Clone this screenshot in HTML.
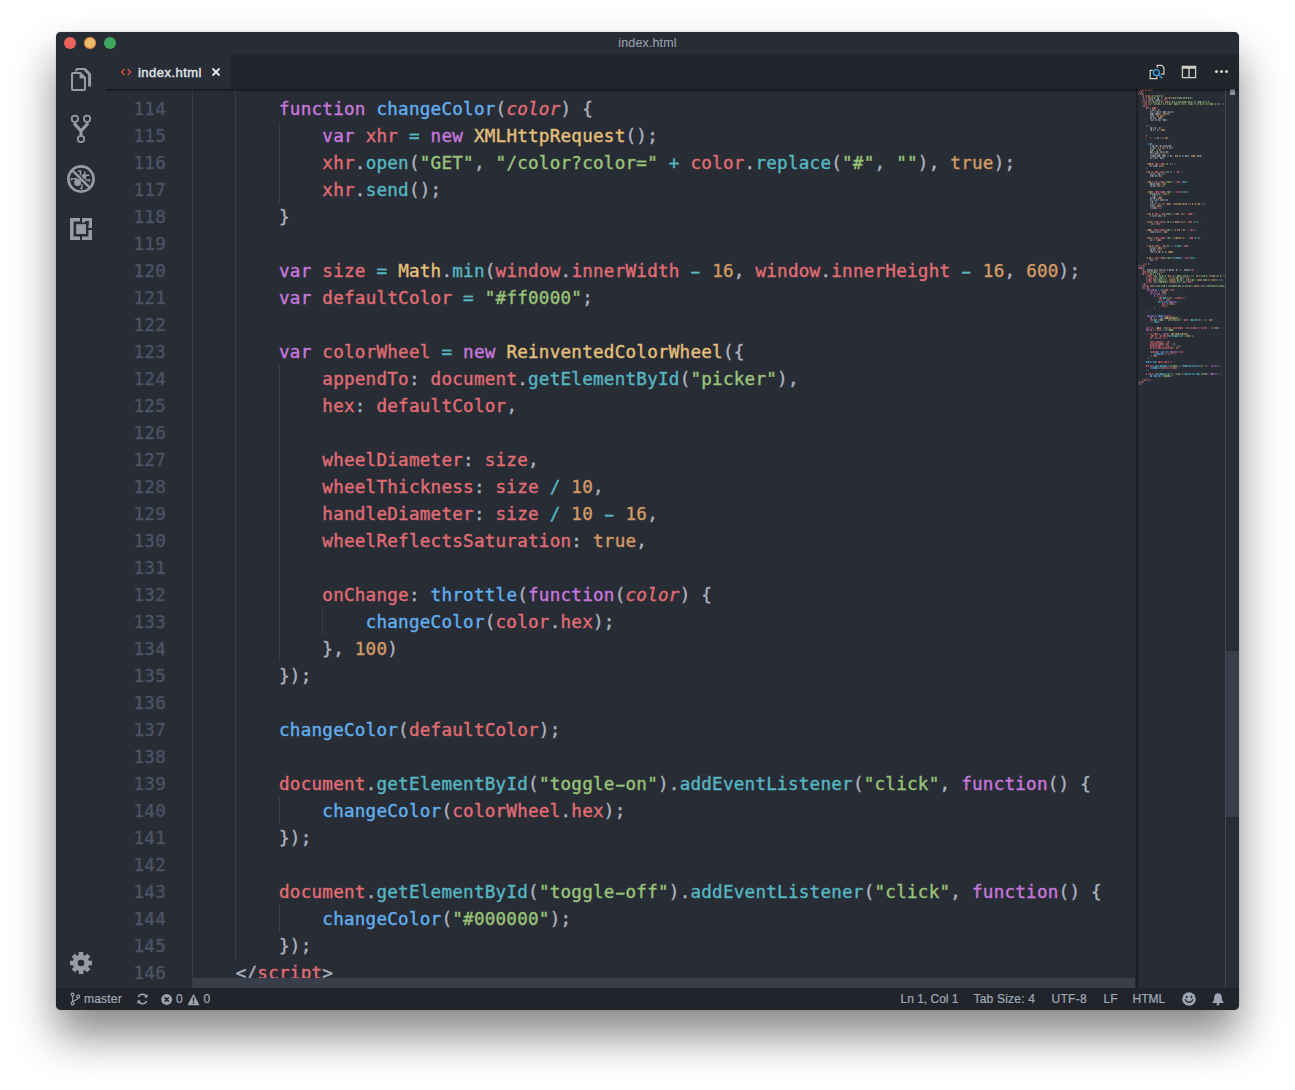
<!DOCTYPE html>
<html lang="en">
<head>
<meta charset="utf-8">
<title>index.html</title>
<style>
html,body{margin:0;padding:0;background:#fff;}
body{width:1295px;height:1090px;position:relative;overflow:hidden;font-family:"Liberation Sans",sans-serif;}
.shadow{position:absolute;left:56px;top:32px;width:1183px;height:978px;border-radius:5px;
  box-shadow:0 0 1px rgba(0,0,0,.45),0 26px 44px rgba(0,0,0,.47);}
.window{position:absolute;left:56px;top:32px;width:1183px;height:978px;border-radius:5px;background:#282c34;overflow:hidden;}
.titlebar{position:absolute;left:0;top:0;right:0;height:22px;background:#282c34;}
.title{position:absolute;left:0;right:0;top:0;height:22px;line-height:22px;text-align:center;font-size:12.5px;color:#9da5b4;letter-spacing:.15px;}
.tl{position:absolute;top:5px;width:12px;height:12px;border-radius:50%;}
.activity{position:absolute;left:0;top:22px;width:50px;bottom:22px;background:#282c34;}
.tabs{position:absolute;left:50px;top:22px;right:0;height:35px;background:#21252b;}
.tab{position:absolute;left:0;top:0;width:124px;height:35px;background:#282c34;}
.tab .lbl{position:absolute;left:32px;top:.7px;line-height:35px;font-size:13px;color:#dfe2e7;letter-spacing:.47px;-webkit-text-stroke:.45px #dfe2e7;}
.editor{position:absolute;left:50px;top:57px;right:0;bottom:22px;background:#282c34;overflow:hidden;}
.topshadow{position:absolute;left:0;right:0;top:0;height:4px;background:linear-gradient(to bottom,rgba(0,0,0,.55),rgba(0,0,0,.18) 45%,rgba(0,0,0,0));z-index:5;}
.mono{font-family:"DejaVu Sans Mono","Liberation Mono",monospace;font-size:17.6px;letter-spacing:.234px;line-height:27px;-webkit-text-stroke:.4px currentColor;}
.nums{position:absolute;left:0;top:6.5px;width:60px;text-align:right;color:#4b5366;}
.code{position:absolute;left:86.4px;top:6.5px;color:#abb2bf;}
.ln{height:27px;white-space:pre;}
.k{color:#c678dd}.f{color:#61afef}.m{color:#56b6c2}.v{color:#e06c75}.s{color:#98c379}
.n{color:#d19a66}.w{display:inline-block;transform:scaleX(1.75);}.c{color:#e5c07b}.o{color:#56b6c2}.i{color:#e06c75;font-style:italic}
.g{position:absolute;width:1px;background:#3b4048;}
.mmwrap{position:absolute;left:1032px;top:0;width:87px;bottom:0;}
.mmshadow{position:absolute;left:1029px;top:0;width:3px;bottom:0;background:linear-gradient(to right,rgba(0,0,0,0),rgba(0,0,0,.22) 45%,rgba(0,0,0,.5));}
.mm{position:absolute;left:0;top:0;}
.vline{position:absolute;left:1119px;top:0;width:1px;bottom:0;background:#434955;}
.vslider{position:absolute;left:1120px;top:562px;width:13px;height:166px;background:#383e4a;}
.hslider{position:absolute;left:86px;top:889px;width:943px;height:10px;background:#383e4a;}
.ovr{position:absolute;left:1124px;top:0;width:5px;height:6px;background:#8c939f;}
.status{position:absolute;left:0;right:0;bottom:0;height:22px;background:#21252b;color:#a2aab8;font-size:12px;line-height:22px;-webkit-text-stroke:.2px #a2aab8;}
.status span{position:absolute;top:0;white-space:nowrap;}
svg{display:block;}
.abs{position:absolute;}
</style>
</head>
<body>
<div class="shadow"></div>
<div class="window">
  <div class="titlebar">
    <div class="tl" style="left:8px;background:#ea635a"></div>
    <div class="tl" style="left:28px;background:#e9bd69;box-shadow:inset 0 0 0 1px rgba(217,80,40,.55)"></div>
    <div class="tl" style="left:48px;background:#3fa65e"></div>
    <div class="title">index.html</div>
  </div>

  <div class="activity">
    <!-- activity icons, coordinates relative to activity bar (abs x-56, abs y-54) -->
    <svg class="abs" style="left:0;top:0" width="50" height="934" viewBox="56 54 50 934" fill="none" stroke="#989ca2">
      <!-- explorer -->
      <g stroke-width="2" stroke-linejoin="round">
        <path d="M73 73h7.400l4.600 4.800V89a1 1 0 0 1-1 1H73a1 1 0 0 1-1-1V74a1 1 0 0 1 1-1z"/>
        <path d="M79.600 72.600v6h5.800z" fill="#989ca2" stroke="none"/>
        <path d="M76.200 71.400V70a1 1 0 0 1 1-1h8"/>
        <path d="M84.800 69.200l4.800 5v12.400" stroke-width="3"/>
      </g>
      <!-- git -->
      <g>
        <circle cx="74.900" cy="118.800" r="3.200" stroke-width="1.700"/>
        <circle cx="87.100" cy="118.800" r="3.200" stroke-width="1.700"/>
        <circle cx="81" cy="139" r="3.200" stroke-width="1.700"/>
        <path d="M74.900 122.400v2l6.100 6.600 6.100-6.600v-2M81 130.400v5.200" stroke-width="3.100" stroke-linejoin="round"/>
      </g>
      <!-- debug -->
      <g>
        <circle cx="81" cy="179" r="12.550" stroke-width="2.800"/>
        <path d="M72.300 170.300l17.400 17.400" stroke-width="2.500"/>
        <circle cx="77.600" cy="182.500" r="3.500" fill="#989ca2" stroke="none"/>
        <path d="M81.300 176l1.900-1.900c1.500-.6 3 .4 3.200 1.800.2 1.200 0 2.100-.6 2.900l-1.300.4z" fill="#989ca2" stroke="none"/>
        <path d="M78 171h2.500v4.600M84.700 171.400v3M86 175.300h3.200M85.400 179.900h4.100v1.800M71.400 180.600v-1.900h5.800M81.900 184.200v4.300h-1.700" stroke-width="1.500"/>
      </g>
      <!-- extensions -->
      <g stroke="none" fill="#989ca2">
        <path d="M70 218h10v3.600h-6.400v14.800H80V240H70z"/>
        <path d="M82 218h10v10h-3.500v-3.300h.400v-3.700h-3.800v1.600H82z"/>
        <path d="M82 236.400h6.400V230H92v10H82z"/>
        <rect x="76.200" y="224.200" width="9.800" height="9.800"/>
      </g>
      <!-- gear -->
      <g transform="translate(81 963)" stroke="none" fill="#989ca2">
        <circle r="8.200"/>
        <rect x="-2.250" y="-11" width="4.500" height="22"/>
        <rect x="-11" y="-2.250" width="22" height="4.500"/>
        <rect x="-2.250" y="-11" width="4.500" height="22" transform="rotate(45)"/>
        <rect x="-2.250" y="-11" width="4.500" height="22" transform="rotate(-45)"/>
        <circle r="3.300" fill="#282c34"/>
      </g>
    </svg>
  </div>

  <div class="tabs">
    <div class="tab">
      <svg class="abs" style="left:14px;top:12.800px" width="12" height="10" viewBox="0 0 12 10" fill="none" stroke="#e05434" stroke-width="1.300"><path d="M4.400 2L1.500 5l2.900 3M7.600 2l2.900 3-2.900 3"/></svg>
      <div class="lbl">index.html</div>
      <svg class="abs" style="left:105px;top:13.400px" width="10" height="10" viewBox="0 0 10 10" fill="none" stroke="#e8eaed" stroke-width="1.800"><path d="M1.500 1.500l7 7M8.500 1.500l-7 7"/></svg>
    </div>
    <!-- editor actions -->
    <svg class="abs" style="left:1042px;top:9px" width="18" height="17" viewBox="1148 63 18 17" fill="none" stroke="#cfcfc6" stroke-width="1.250">
      <path d="M1157.200 67.800V65.400H1161.800L1163.900 67.700V74.100H1160.800"/>
      <path d="M1152.800 70.400H1150.200V78.700H1156.900V76.600"/>
      <circle cx="1156.400" cy="72.600" r="3" stroke="#3da5ea" stroke-width="1.300"/>
      <path d="M1158.600 74.900l3.700 3.400" stroke="#3da5ea" stroke-width="1.400"/>
    </svg>
    <svg class="abs" style="left:1075px;top:11px" width="16" height="14" viewBox="0 0 16 14" fill="none" stroke="#cfcfc6">
      <rect x="1.400" y="1.400" width="13.200" height="11.200" stroke-width="1.300"/>
      <path d="M1.400 2.400h13.200" stroke-width="2.600"/>
      <path d="M8 2v10.400" stroke-width="1.400"/>
    </svg>
    <svg class="abs" style="left:1107px;top:13px" width="16" height="8" viewBox="0 0 16 8" fill="#cfcfc6"><circle cx="3.450" cy="4.450" r="1.550"/><circle cx="8.500" cy="4.450" r="1.550"/><circle cx="13.550" cy="4.450" r="1.550"/></svg>
  </div>

  <div class="editor">
    <div class="nums mono">
<div class="ln">114</div>
<div class="ln">115</div>
<div class="ln">116</div>
<div class="ln">117</div>
<div class="ln">118</div>
<div class="ln">119</div>
<div class="ln">120</div>
<div class="ln">121</div>
<div class="ln">122</div>
<div class="ln">123</div>
<div class="ln">124</div>
<div class="ln">125</div>
<div class="ln">126</div>
<div class="ln">127</div>
<div class="ln">128</div>
<div class="ln">129</div>
<div class="ln">130</div>
<div class="ln">131</div>
<div class="ln">132</div>
<div class="ln">133</div>
<div class="ln">134</div>
<div class="ln">135</div>
<div class="ln">136</div>
<div class="ln">137</div>
<div class="ln">138</div>
<div class="ln">139</div>
<div class="ln">140</div>
<div class="ln">141</div>
<div class="ln">142</div>
<div class="ln">143</div>
<div class="ln">144</div>
<div class="ln">145</div>
<div class="ln">146</div>
    </div>
    <!-- indent guides (editor-relative) -->
    <div class="g" style="left:86px;top:0;height:899px"></div>
    <div class="g" style="left:129px;top:0;height:869.5px"></div>
    <div class="g" style="left:173px;top:32.500px;height:81px"></div>
    <div class="g" style="left:173px;top:275.500px;height:297px"></div>
    <div class="g" style="left:173px;top:707.500px;height:27px"></div>
    <div class="g" style="left:173px;top:815.500px;height:27px"></div>
    <div class="g" style="left:216px;top:518.500px;height:27px"></div>
    <div class="code mono">
<div class="ln">        <span class="k">function</span> <span class="f">changeColor</span>(<span class="i">color</span>) {</div>
<div class="ln">            <span class="k">var</span> <span class="v">xhr</span> <span class="o">=</span> <span class="k">new</span> <span class="c">XMLHttpRequest</span>();</div>
<div class="ln">            <span class="v">xhr</span>.<span class="m">open</span>(<span class="s">"GET"</span>, <span class="s">"/color?color="</span> <span class="o">+</span> <span class="v">color</span>.<span class="m">replace</span>(<span class="s">"#"</span>, <span class="s">""</span>), <span class="n">true</span>);</div>
<div class="ln">            <span class="v">xhr</span>.<span class="m">send</span>();</div>
<div class="ln">        }</div>
<div class="ln"></div>
<div class="ln">        <span class="k">var</span> <span class="v">size</span> <span class="o">=</span> <span class="c">Math</span>.<span class="m">min</span>(<span class="v">window</span>.<span class="v">innerWidth</span> <span class="o w">-</span> <span class="n">16</span>, <span class="v">window</span>.<span class="v">innerHeight</span> <span class="o w">-</span> <span class="n">16</span>, <span class="n">600</span>);</div>
<div class="ln">        <span class="k">var</span> <span class="v">defaultColor</span> <span class="o">=</span> <span class="s">"#ff0000"</span>;</div>
<div class="ln"></div>
<div class="ln">        <span class="k">var</span> <span class="v">colorWheel</span> <span class="o">=</span> <span class="k">new</span> <span class="c">ReinventedColorWheel</span>({</div>
<div class="ln">            <span class="v">appendTo</span>: <span class="v">document</span>.<span class="m">getElementById</span>(<span class="s">"picker"</span>),</div>
<div class="ln">            <span class="v">hex</span>: <span class="v">defaultColor</span>,</div>
<div class="ln"></div>
<div class="ln">            <span class="v">wheelDiameter</span>: <span class="v">size</span>,</div>
<div class="ln">            <span class="v">wheelThickness</span>: <span class="v">size</span> <span class="o">/</span> <span class="n">10</span>,</div>
<div class="ln">            <span class="v">handleDiameter</span>: <span class="v">size</span> <span class="o">/</span> <span class="n">10</span> <span class="o w">-</span> <span class="n">16</span>,</div>
<div class="ln">            <span class="v">wheelReflectsSaturation</span>: <span class="n">true</span>,</div>
<div class="ln"></div>
<div class="ln">            <span class="v">onChange</span>: <span class="f">throttle</span>(<span class="k">function</span>(<span class="i">color</span>) {</div>
<div class="ln">                <span class="f">changeColor</span>(<span class="v">color</span>.<span class="v">hex</span>);</div>
<div class="ln">            }, <span class="n">100</span>)</div>
<div class="ln">        });</div>
<div class="ln"></div>
<div class="ln">        <span class="f">changeColor</span>(<span class="v">defaultColor</span>);</div>
<div class="ln"></div>
<div class="ln">        <span class="v">document</span>.<span class="m">getElementById</span>(<span class="s">"toggle<span class="w">-</span>on"</span>).<span class="m">addEventListener</span>(<span class="s">"click"</span>, <span class="k">function</span>() {</div>
<div class="ln">            <span class="f">changeColor</span>(<span class="v">colorWheel</span>.<span class="v">hex</span>);</div>
<div class="ln">        });</div>
<div class="ln"></div>
<div class="ln">        <span class="v">document</span>.<span class="m">getElementById</span>(<span class="s">"toggle<span class="w">-</span>off"</span>).<span class="m">addEventListener</span>(<span class="s">"click"</span>, <span class="k">function</span>() {</div>
<div class="ln">            <span class="f">changeColor</span>(<span class="s">"#000000"</span>);</div>
<div class="ln">        });</div>
<div class="ln">    &lt;/<span class="v">script</span>&gt;</div>
    </div>
    <div class="hslider"></div>
    <div class="mmshadow"></div>
    <div class="mmwrap"><svg class="mm" width="87" height="296" viewBox="0 0 87 296" shape-rendering="crispEdges" fill="none" stroke-width="1.15"><path d="M43 93h1M58 133h1M58 149h2M51 169h1M20 207h1M28 209h1M25 239h1M46 239h1M71 239h1M33 247h1M40 247h1M43 247h1M33 255h1M33 257h1M21 277h1M29 277h1M21 285h1M53 285h1M57 285h1" stroke="#56b6c2" stroke-opacity="0.14"/><path d="M44 93h1M43 103h3M55 133h2M60 133h1M61 149h1M36 157h1M38 157h1M35 169h1M37 169h1M54 169h1M56 169h1M21 203h1M25 211h1M20 229h1M44 231h1M52 231h1M55 231h1M17 239h1M23 245h1M35 247h1M38 257h1M50 277h1M52 277h1M58 277h1M60 277h1M19 285h1M26 285h1M46 285h1M56 285h1M58 285h1M61 285h1" stroke="#56b6c2" stroke-opacity="0.28"/><path d="M46 93h3M46 103h3M57 133h1M59 133h1M37 157h1M39 157h1M41 157h1M36 169h1M39 169h1M41 169h1M52 169h2M29 209h1M29 215h1M18 231h1M56 231h2M16 233h3M26 239h1M25 241h1M32 247h1M36 247h1M39 247h1M41 247h2M18 277h3M24 277h1M26 277h1M28 277h1M30 277h1M46 277h1M49 277h1M53 277h5M17 285h2M25 285h1M29 285h1M48 285h5M54 285h2" stroke="#56b6c2" stroke-opacity="0.45"/><path d="M45 93h1M57 149h1M60 149h1M40 157h1M42 157h1M38 169h1M40 169h1M42 169h1M55 169h1M25 209h3M16 231h2M53 231h2M58 231h1M19 233h1M31 247h1M34 247h1M37 247h2M44 247h1M17 277h1M22 277h2M25 277h1M27 277h1M45 277h1M47 277h2M51 277h1M59 277h1M20 285h1M22 285h3M27 285h1M30 285h1M47 285h1M59 285h2" stroke="#56b6c2" stroke-opacity="0.68"/><path d="M14 55h1M22 201h1M25 227h1M22 263h1M26 263h1M26 265h1M20 279h1" stroke="#61afef" stroke-opacity="0.14"/><path d="M8 55h1M10 55h1M20 201h1M22 213h2M27 213h2M18 227h1M27 227h1M23 263h1M27 263h2M17 265h1M25 265h1M9 273h1M11 273h1M13 273h1M16 273h1M18 273h1M13 279h1M22 279h1M14 287h1M19 287h2M22 287h1" stroke="#61afef" stroke-opacity="0.28"/><path d="M11 55h2M17 201h2M23 201h2M20 213h2M24 213h1M26 213h1M29 213h1M17 227h1M20 227h1M22 227h1M24 227h1M26 227h1M24 263h2M29 263h1M16 265h1M18 265h2M21 265h4M12 273h1M12 279h1M14 279h2M18 279h2M21 279h1M18 287h1" stroke="#61afef" stroke-opacity="0.45"/><path d="M13 55h1M21 227h1M23 227h1M20 265h1M8 273h1M10 273h1M15 273h1M17 273h1M16 279h2M12 287h2M16 287h2M21 287h1" stroke="#61afef" stroke-opacity="0.68"/><path d="M18 7h1M22 7h1M24 7h1M15 9h1M23 9h1M36 9h1M38 9h1M47 9h1M49 9h1M14 13h1M16 13h1M24 13h1M32 13h1M35 13h1M43 13h1M49 13h1M54 13h2M59 13h1M63 13h1M67 13h1M14 15h1M18 15h1M30 15h1M35 15h1M39 15h1M61 15h1M63 15h1M66 15h1M31 75h1M33 75h1M27 83h1M27 93h1M27 103h1M33 103h1M21 107h2M33 125h1M27 133h1M33 133h1M27 141h1M33 141h1M27 149h1M33 149h1M27 157h1M33 157h1M27 169h1M33 169h1M12 183h1M19 183h1M20 185h1M22 185h1M19 187h1M23 187h1M25 187h1M28 187h1M36 187h2M44 187h1M50 187h1M67 187h1M69 187h1M77 187h1M83 187h1M37 189h1M41 189h1M18 191h2M25 191h1M29 191h1M51 191h1M57 191h1M69 191h1M84 191h1M19 193h2M30 193h1M38 193h1M40 193h1M42 193h1M16 197h1M39 197h1M43 197h1M50 197h1M66 197h1M73 197h1M79 197h1M25 231h1M28 231h1M38 231h1M42 231h1M65 231h2M27 241h1M29 241h2M35 241h1M52 247h2M39 277h1M62 277h1M33 285h1M39 285h1M43 285h1M69 285h1M24 287h1M32 287h1" stroke="#98c379" stroke-opacity="0.14"/><path d="M20 7h1M24 9h1M34 9h1M40 9h1M44 9h1M51 9h1M53 9h1M19 13h2M25 13h1M33 13h1M38 13h1M40 13h1M48 13h1M52 13h1M57 13h1M65 13h1M22 15h2M33 15h1M40 15h1M44 15h4M51 15h1M56 15h3M60 15h1M67 15h2M70 15h2M76 15h1M80 15h1M84 15h1M28 83h1M32 83h2M28 93h1M31 93h1M33 93h1M32 103h1M27 125h2M31 125h1M28 141h1M31 141h2M29 149h1M31 149h2M28 157h1M32 157h1M28 169h2M31 169h1M14 183h1M15 185h1M18 187h1M26 187h1M41 187h1M48 187h1M51 187h1M53 187h3M62 187h3M78 187h1M80 187h1M19 189h1M24 189h3M28 189h1M40 189h1M23 191h1M27 191h2M37 191h1M45 191h1M49 191h1M53 191h1M56 191h1M71 191h1M79 191h1M81 191h3M24 193h1M26 193h1M28 193h2M17 197h2M24 197h1M30 197h1M33 197h1M44 197h1M46 197h2M52 197h3M67 197h3M76 197h1M81 197h1M85 197h2M21 231h1M32 231h2M35 231h1M40 231h1M60 231h1M62 231h1M46 247h1M48 247h1M32 277h1M34 277h1M40 277h1M42 277h1M32 285h1M37 285h1M42 285h1M63 285h1" stroke="#98c379" stroke-opacity="0.28"/><path d="M21 7h1M19 9h1M39 9h1M42 9h2M45 9h1M52 9h1M17 13h2M21 13h1M39 13h1M41 13h2M45 13h2M50 13h1M53 13h1M56 13h1M61 13h1M64 13h1M66 13h1M68 13h1M16 15h2M19 15h1M21 15h1M32 15h1M36 15h1M41 15h1M43 15h1M50 15h1M52 15h1M54 15h1M59 15h1M64 15h2M69 15h1M72 15h1M77 15h1M79 15h1M81 15h1M28 75h2M32 75h1M29 83h2M29 93h1M32 93h1M29 103h1M31 103h1M29 125h1M32 125h1M29 133h1M32 133h1M29 141h1M29 157h2M32 169h1M15 183h1M17 183h2M17 185h1M19 185h1M21 187h2M27 187h1M45 187h3M49 187h1M65 187h1M68 187h1M79 187h1M21 189h2M39 189h1M20 191h1M22 191h1M24 191h1M26 191h1M42 191h1M48 191h1M52 191h1M55 191h1M65 191h2M68 191h1M70 191h1M21 193h1M39 193h1M41 193h1M19 197h3M25 197h1M28 197h1M31 197h2M34 197h1M36 197h3M41 197h2M45 197h1M48 197h2M70 197h3M75 197h1M77 197h2M80 197h1M82 197h2M30 231h2M34 231h1M36 231h2M41 231h1M61 231h1M28 241h1M50 247h1M33 277h1M35 277h1M37 277h2M63 277h2M67 277h1M34 285h1M38 285h1M41 285h1M64 285h4M25 287h2M29 287h1" stroke="#98c379" stroke-opacity="0.45"/><path d="M19 7h1M23 7h1M16 9h1M20 9h1M35 9h1M37 9h1M41 9h1M46 9h1M48 9h1M50 9h1M15 13h1M23 13h1M34 13h1M36 13h1M44 13h1M47 13h1M51 13h1M60 13h1M62 13h1M70 13h1M20 15h1M31 15h1M37 15h2M53 15h1M62 15h1M73 15h2M30 93h1M30 103h1M30 125h1M30 133h1M30 141h1M30 149h1M30 169h1M13 183h1M16 183h1M21 185h1M24 187h1M39 187h2M42 187h1M66 187h1M82 187h1M23 189h1M38 189h1M21 191h1M39 191h2M43 191h1M50 191h1M54 191h1M67 191h1M22 193h2M25 193h1M27 193h1M23 197h1M26 197h1M35 197h1M40 197h1M51 197h1M74 197h1M84 197h1M22 231h3M39 231h1M31 241h4M49 247h1M51 247h1M36 277h1M40 285h1M68 285h1M27 287h2M30 287h2" stroke="#98c379" stroke-opacity="0.68"/><path d="M0 1h1M14 1h1M0 3h1M5 3h1M5 5h1M4 7h1M25 7h1M4 9h1M54 9h1M4 11h1M10 11h1M15 11h1M22 11h1M72 13h1M4 15h1M85 15h1M4 17h1M10 17h1M19 19h1M18 21h1M21 21h1M15 23h3M23 23h1M29 23h1M22 25h1M16 27h2M18 29h1M16 31h1M23 31h1M29 31h1M8 33h1M14 39h1M16 39h1M23 39h1M16 41h1M21 41h1M27 41h1M8 43h1M16 49h1M30 49h1M8 51h1M16 55h1M13 57h1M16 57h1M24 57h1M33 57h1M14 59h1M33 59h1M23 61h1M15 63h1M17 63h1M20 63h1M24 63h1M27 63h1M30 63h1M16 65h1M22 65h1M30 65h1M18 67h1M22 67h1M51 67h1M63 67h1M14 69h1M16 69h1M8 71h1M21 75h1M16 77h1M25 77h1M21 83h1M36 83h1M22 85h1M24 85h1M27 85h1M24 87h1M8 89h1M21 93h1M34 93h1M36 93h1M17 95h1M22 95h1M14 97h1M26 97h1M21 103h1M34 103h1M36 103h1M50 103h1M17 105h1M22 105h1M31 105h1M15 107h1M14 109h1M18 109h1M24 109h1M17 111h1M12 113h1M15 113h1M17 115h3M55 115h1M62 115h1M13 117h1M17 117h1M19 119h1M23 119h1M8 121h1M21 125h1M34 125h1M48 125h1M56 125h1M24 127h1M27 127h1M8 129h1M21 133h1M48 133h1M62 133h1M12 135h1M15 135h1M22 135h1M21 141h1M34 141h1M49 141h1M16 143h1M23 143h1M8 145h1M21 149h1M34 149h1M49 149h1M63 149h1M14 151h1M16 151h1M23 151h1M8 153h1M21 157h1M34 157h1M44 157h1M52 157h1M17 159h2M27 159h1M23 161h1M35 163h1M21 169h1M44 169h1M58 169h1M16 171h1M19 171h1M8 173h1M4 175h2M0 177h2M7 181h1M28 181h1M33 181h1M52 181h1M56 181h1M4 183h1M20 183h3M26 183h1M23 185h1M46 189h1M52 189h1M8 193h1M43 193h1M48 193h1M54 193h1M4 195h2M9 195h1M4 199h1M11 199h1M30 201h1M39 201h1M28 203h1M27 205h2M30 205h1M24 209h1M30 209h1M35 209h1M46 209h2M40 213h1M42 213h1M21 217h1M28 217h2M12 221h1M36 227h1M40 229h3M15 231h1M26 231h1M59 231h1M68 231h1M15 233h1M20 233h2M8 235h1M23 239h1M34 239h1M58 239h1M75 239h1M80 239h1M49 245h2M15 249h1M29 249h1M25 253h1M31 253h1M26 255h1M26 257h1M42 257h1M35 259h1M41 259h1M30 263h1M39 263h1M45 263h1M47 263h1M27 265h1M33 265h1M37 265h2M12 267h1M9 269h1M32 273h1M16 277h1M31 277h1M43 277h2M34 279h1M39 279h1M8 281h3M31 285h1M45 285h1M62 285h1M70 285h1M80 285h2M83 285h1M23 287h1M33 287h1M8 289h1M10 289h1M5 291h1M12 291h1M0 293h1M1 295h1M6 295h1" stroke="#abb2bf" stroke-opacity="0.14"/><path d="M0 5h1M33 9h1M13 11h1M18 11h1M23 11h1M4 13h1M13 13h1M13 15h1M12 19h1M16 21h2M12 23h1M14 23h1M18 23h1M20 23h2M28 23h1M32 23h1M34 23h2M31 25h1M26 27h1M13 29h1M17 29h1M24 29h1M15 31h1M17 31h1M22 31h1M28 31h1M11 37h1M18 39h1M12 41h1M17 41h1M20 41h1M17 49h3M22 49h1M17 57h1M19 57h1M21 57h1M23 57h1M27 57h1M29 57h1M13 59h1M16 59h1M13 61h1M15 61h1M16 63h1M26 63h1M12 65h1M14 65h2M19 65h1M13 67h1M27 67h1M29 67h2M45 67h1M49 67h1M61 67h1M15 69h1M19 69h1M25 69h1M26 75h1M34 75h1M36 75h1M13 77h1M19 77h1M8 79h1M26 83h1M44 83h1M14 85h1M16 85h2M23 85h1M25 85h2M13 87h1M19 87h1M26 93h1M15 95h1M17 97h1M13 105h1M20 105h1M19 107h1M23 107h1M17 109h1M13 111h2M19 111h2M25 111h2M28 111h1M13 113h1M18 113h1M12 115h1M14 115h1M16 115h1M20 115h3M47 115h1M52 115h1M65 115h2M15 117h1M23 117h1M12 119h3M14 127h1M16 127h1M18 127h1M20 127h1M23 127h1M34 133h1M13 135h1M16 135h1M26 141h1M57 141h1M18 143h2M21 143h2M26 149h1M15 151h1M13 159h2M14 161h1M17 161h1M12 163h1M15 163h3M22 163h1M25 163h1M28 163h1M34 169h1M14 171h2M11 175h1M6 177h1M0 179h1M5 179h1M4 181h1M17 181h1M19 181h1M27 181h1M39 181h1M50 181h1M53 181h1M11 183h1M4 185h1M14 185h1M8 187h1M8 189h1M36 189h1M42 189h1M44 189h2M8 191h1M36 191h1M78 191h1M37 193h1M44 193h1M47 193h1M4 197h1M25 201h1M19 207h1M27 207h1M31 211h1M30 213h1M36 215h1M16 219h1M8 223h1M28 227h1M34 227h1M20 231h1M63 231h1M67 231h1M74 231h1M27 239h1M50 239h1M81 239h1M30 247h1M54 247h2M20 263h1M13 267h1M18 267h1M10 269h1M33 273h1M61 277h1M69 277h1M80 277h1M82 277h1M23 279h1M38 279h1M44 285h1M34 287h1M4 291h1M1 293h1M0 295h1" stroke="#abb2bf" stroke-opacity="0.28"/><path d="M17 7h1M14 9h1M11 11h2M17 11h1M20 11h2M31 13h1M29 15h1M12 21h1M14 21h1M13 23h1M22 23h1M27 23h1M30 23h2M33 23h1M13 25h1M15 25h1M17 25h1M20 25h2M12 27h4M16 29h1M14 31h1M18 31h1M21 31h1M27 31h1M12 39h1M15 39h1M17 39h1M15 41h1M19 41h1M12 49h1M12 57h1M14 57h1M25 57h2M30 57h2M12 59h1M17 59h1M31 59h2M34 59h1M12 61h1M14 63h1M18 63h1M22 63h1M25 63h1M29 63h1M13 65h1M18 65h1M20 65h2M12 67h1M14 67h1M16 67h2M19 67h1M24 67h1M33 67h1M41 67h2M44 67h1M50 67h1M59 67h1M12 69h2M17 69h2M23 69h2M12 85h2M15 85h1M15 87h1M18 87h1M14 95h1M18 95h2M21 95h1M12 97h2M16 97h1M26 103h1M14 105h2M18 105h2M21 105h1M14 107h1M17 107h1M12 109h2M16 111h1M22 111h2M27 111h1M29 111h1M13 115h1M15 115h1M16 117h1M15 119h1M17 119h2M26 125h1M12 127h1M15 127h1M17 127h1M22 127h1M26 133h1M14 135h1M12 143h3M17 143h1M20 143h1M12 151h2M26 157h1M12 159h1M15 159h1M12 161h1M15 161h2M13 163h2M18 163h1M20 163h1M24 163h1M27 163h1M26 169h1M12 171h2M9 181h2M12 181h3M18 181h1M21 181h2M25 181h2M29 181h1M35 181h1M42 181h1M46 181h3M51 181h1M17 187h1M35 187h1M61 187h1M76 187h1M18 189h1M17 191h1M63 191h1M18 193h1M45 193h2M15 197h1M65 197h1" stroke="#abb2bf" stroke-opacity="0.45"/><path d="M14 11h1M19 11h1M15 21h1M19 23h1M25 23h2M12 25h1M14 25h1M18 25h2M12 29h1M15 29h1M13 31h1M20 31h1M25 31h2M13 39h1M13 41h1M20 49h1M15 57h1M18 57h1M22 57h1M28 57h1M32 57h1M15 59h1M14 61h1M12 63h2M19 63h1M23 63h1M28 63h1M17 65h1M15 67h1M20 67h2M25 67h2M32 67h1M47 67h2M60 67h1M62 67h1M22 69h1M12 77h1M15 77h1M17 77h2M20 85h2M12 87h1M14 87h1M17 87h1M12 95h2M16 95h1M20 95h1M15 97h1M12 105h1M16 105h1M16 107h1M15 109h2M12 111h1M18 111h1M24 111h1M14 113h1M12 117h1M14 117h1M16 119h1M21 127h1M15 143h1M16 159h1M13 161h1M21 163h1M11 181h1M16 181h1M23 181h1M31 181h2M34 181h1M38 181h1M49 181h1M43 189h1" stroke="#abb2bf" stroke-opacity="0.68"/><path d="M8 201h1M12 205h1M23 205h1M17 207h1M10 245h1M31 263h1" stroke="#c678dd" stroke-opacity="0.14"/><path d="M9 201h1M14 203h1M15 205h3M24 205h2M31 213h1M36 213h1M38 213h1M12 227h1M9 239h1M9 245h1M25 245h1M35 263h1M75 277h2M72 285h1M76 285h2" stroke="#c678dd" stroke-opacity="0.28"/><path d="M11 201h1M13 201h2M12 203h2M13 205h1M19 205h3M26 205h1M16 207h1M34 213h2M37 213h1M9 227h3M13 227h3M12 229h1M22 229h3M8 239h1M10 239h1M8 241h1M10 241h1M26 245h1M32 263h1M34 263h1M36 263h3M73 277h2M77 277h2M75 285h1M78 285h1" stroke="#c678dd" stroke-opacity="0.45"/><path d="M10 201h1M15 201h1M32 213h2M13 229h1M9 241h1M27 245h1M33 263h1M73 285h2" stroke="#c678dd" stroke-opacity="0.68"/><path d="M12 13h1M20 29h1M29 65h1M8 93h2M13 93h1M23 97h1M29 105h1M27 115h1M58 115h1M8 125h1M35 125h2M42 125h1M45 125h1M8 133h1M36 133h1M9 141h1M35 141h2M42 141h2M47 141h1M25 143h1M8 149h1M35 149h1M8 157h2M13 157h1M13 169h1M10 185h1M32 189h1M15 193h1M61 197h1M63 197h1M23 203h1M34 209h1M70 231h1M73 239h1" stroke="#d19a66" stroke-opacity="0.14"/><path d="M13 1h1M13 7h1M16 7h1M13 9h1M29 9h2M32 9h1M30 13h1M10 15h1M12 15h1M26 15h1M25 25h1M27 25h1M25 27h1M22 39h1M25 49h1M26 59h2M22 61h1M24 65h1M26 65h2M57 67h1M9 75h1M13 75h1M23 77h1M8 83h2M13 83h1M24 95h1M27 95h1M22 97h1M24 97h2M9 103h2M24 105h2M30 105h1M23 109h1M24 115h1M26 115h1M35 115h1M40 115h1M43 115h2M51 115h1M59 115h1M64 115h1M21 119h2M9 125h2M37 125h1M43 125h1M46 125h1M9 133h1M14 133h1M35 133h1M40 133h1M44 133h2M18 135h1M8 141h1M13 141h1M40 141h1M9 149h1M13 149h2M37 149h1M40 149h1M42 149h3M46 149h1M18 151h2M10 157h1M22 159h1M25 159h2M20 161h3M8 169h1M14 169h1M9 183h1M11 185h1M15 187h1M31 187h1M33 187h1M73 187h1M85 187h2M16 189h2M33 189h2M75 191h1M77 191h1M17 193h1M34 193h1M59 197h1M62 197h1M33 209h1M29 211h1M33 215h1M35 215h1M71 231h1M48 239h1M35 255h1M35 257h1M40 257h1M38 259h1M15 267h1" stroke="#d19a66" stroke-opacity="0.28"/><path d="M10 1h3M11 7h1M10 9h2M28 9h1M10 13h2M27 13h2M11 15h1M25 15h1M27 15h1M24 25h1M28 25h3M19 27h1M23 27h2M23 29h1M23 41h1M26 41h1M24 49h1M27 49h1M29 49h1M20 59h1M22 59h1M24 59h2M19 61h1M25 65h1M38 67h1M53 67h2M10 75h1M21 77h2M24 77h1M10 83h1M14 83h1M22 87h2M10 93h1M14 93h1M25 95h1M19 97h3M13 103h2M26 105h3M20 109h1M17 113h1M25 115h1M31 115h2M36 115h4M42 115h1M46 115h1M50 115h1M60 115h1M19 117h1M21 117h2M12 125h1M38 125h1M40 125h1M10 133h4M38 133h1M41 133h1M43 133h1M46 133h1M19 135h3M37 141h1M46 141h1M26 143h1M10 149h3M36 149h1M45 149h1M22 151h1M11 157h1M19 161h1M30 163h1M34 163h1M9 169h1M18 171h1M9 185h1M13 185h1M16 187h1M32 187h1M58 187h1M71 187h2M74 187h1M15 189h1M31 189h1M35 189h1M15 191h1M31 191h3M35 191h1M59 191h1M61 191h2M73 191h1M16 193h1M33 193h1M35 193h1M12 197h3M56 197h1M58 197h1M64 197h1M24 203h2M27 203h1M31 209h2M28 211h1M30 211h1M31 215h2M73 231h1M49 239h1M74 239h1M79 239h1M41 257h1M16 267h1" stroke="#d19a66" stroke-opacity="0.45"/><path d="M10 7h1M14 7h1M12 9h1M27 9h1M31 9h1M29 13h1M20 21h1M26 25h1M20 27h1M22 27h1M21 29h2M21 39h1M24 41h2M28 49h1M29 59h1M21 61h1M37 67h1M39 67h1M55 67h2M11 75h2M14 75h1M11 83h1M21 87h1M11 93h2M26 95h1M11 103h2M21 109h2M29 115h2M41 115h1M45 115h1M48 115h1M54 115h1M57 115h1M61 115h1M20 117h1M11 125h1M14 125h1M39 125h1M44 125h1M26 127h1M37 133h1M39 133h1M10 141h3M39 141h1M41 141h1M45 141h1M27 143h2M38 149h2M41 149h1M20 151h2M12 157h1M14 157h1M20 159h2M23 159h1M31 163h3M11 169h2M10 183h1M12 185h1M30 187h1M59 187h1M75 187h1M16 191h1M34 191h1M60 191h1M74 191h1M76 191h1M32 193h1M36 193h1M57 197h1M60 197h1M26 203h1M34 215h1M72 231h1M77 239h2M36 255h1M39 259h1M17 267h1" stroke="#d19a66" stroke-opacity="0.68"/><path d="M1 1h1M2 3h1M7 11h1M24 11h2M5 15h1M8 17h1M16 75h1M22 75h1M20 83h1M38 83h1M42 93h1M16 103h1M20 125h1M22 125h1M51 141h1M16 157h1M22 157h1M7 175h1M6 181h1M55 181h1M6 185h1M51 189h1M49 193h1M8 197h1M18 203h1M26 215h1M14 233h1M59 239h1M63 239h1M18 241h1M23 241h1M19 249h1M26 249h1M16 255h1M25 257h1M16 259h1M42 263h1M25 273h1M31 273h1" stroke="#e06c75" stroke-opacity="0.14"/><path d="M6 1h1M4 3h1M7 7h1M7 9h2M5 11h1M8 11h2M26 11h2M5 13h1M7 13h1M6 15h1M9 17h1M9 37h1M20 75h1M16 83h1M22 83h1M25 83h1M41 83h1M16 93h1M19 93h2M22 93h1M38 93h1M41 93h1M22 103h1M38 103h1M41 103h2M16 125h1M25 125h1M54 125h1M16 133h1M20 133h1M23 133h1M25 133h1M20 141h1M52 141h1M55 141h1M17 149h1M20 149h1M22 149h2M51 149h1M55 149h1M16 169h2M20 169h1M22 169h1M46 169h1M50 169h1M6 175h1M3 177h1M24 183h1M7 185h1M9 187h1M13 187h1M9 189h1M9 191h1M13 191h1M12 193h1M52 193h2M7 195h1M8 199h1M10 199h1M26 201h1M33 201h1M35 201h2M19 203h1M22 207h3M20 209h2M38 209h1M42 209h4M22 211h1M23 217h2M27 217h1M30 227h1M32 227h1M18 229h1M48 231h1M12 233h1M12 239h2M29 239h2M32 239h1M35 239h1M39 239h1M43 239h1M53 239h2M62 239h1M65 239h2M17 241h1M20 241h1M13 245h2M19 245h3M18 247h2M20 249h1M22 249h2M25 249h1M16 253h3M28 253h2M13 255h1M19 255h2M14 257h1M16 257h1M19 257h1M24 257h1M29 257h1M18 259h2M23 259h1M26 259h1M29 259h1M31 259h1M34 259h1M12 263h1M44 263h1M30 265h1M36 265h1M22 273h1M24 273h1M26 273h1M29 273h1M15 277h1M24 279h1M28 279h1M30 279h3M10 285h1M13 285h2M11 291h1M3 293h1M3 295h1" stroke="#e06c75" stroke-opacity="0.28"/><path d="M2 1h4M7 1h1M1 3h1M2 5h2M5 9h1M6 11h1M28 11h1M6 13h1M8 13h1M7 15h2M5 17h3M9 19h2M15 19h1M8 37h1M17 75h1M19 75h1M23 75h1M18 83h1M23 83h1M40 83h1M17 93h2M25 93h1M39 93h1M17 103h1M19 103h2M24 103h1M39 103h1M17 125h1M19 125h1M50 125h2M17 133h2M22 133h1M50 133h2M53 133h1M16 141h4M22 141h3M54 141h1M16 149h1M19 149h1M17 157h1M19 157h2M46 157h2M19 169h1M23 169h1M49 169h1M8 175h1M10 175h1M2 177h1M1 179h1M4 179h1M5 181h1M6 183h1M23 183h1M25 183h1M10 187h1M12 187h1M11 189h3M48 189h3M10 191h1M9 193h1M13 193h1M50 193h1M5 197h3M10 197h1M5 199h2M27 201h2M32 201h1M16 203h2M23 209h1M37 209h1M39 209h2M21 211h1M23 211h1M25 215h1M27 215h1M25 217h2M31 227h1M16 229h1M12 231h3M47 231h1M14 239h1M36 239h3M41 239h1M55 239h1M68 239h1M12 241h1M15 241h1M19 241h1M21 241h2M12 245h1M16 245h1M18 245h1M15 247h1M17 247h1M23 247h1M28 247h2M13 249h1M17 249h2M21 249h1M27 249h1M12 253h4M20 253h5M14 255h1M17 255h1M24 255h2M29 255h2M13 257h1M17 257h2M20 257h1M22 257h1M28 257h1M13 259h1M17 259h1M20 259h1M22 259h1M24 259h2M27 259h1M30 259h1M32 259h1M14 263h4M28 265h1M31 265h1M34 265h1M20 273h1M23 273h1M28 273h1M30 273h1M9 277h2M12 277h3M26 279h2M29 279h1M33 279h1M37 279h1M11 285h1M15 285h1M6 291h3M10 291h1M2 293h1M4 293h2M2 295h1" stroke="#e06c75" stroke-opacity="0.45"/><path d="M8 1h1M3 3h1M4 5h1M5 7h1M8 7h1M8 19h1M14 19h1M16 19h2M8 47h1M18 75h1M24 75h2M17 83h1M19 83h1M24 83h1M39 83h1M23 93h2M40 93h1M18 103h1M23 103h1M25 103h1M40 103h1M18 125h1M24 125h1M52 125h2M19 133h1M24 133h1M52 133h1M25 141h1M53 141h1M18 149h1M24 149h2M52 149h3M18 157h1M25 157h1M48 157h2M18 169h1M24 169h2M48 169h1M5 177h1M2 179h2M54 181h1M5 183h1M7 183h1M5 185h1M11 187h1M11 191h2M11 193h1M51 193h1M6 195h1M9 197h1M9 199h1M29 201h1M34 201h1M22 209h1M41 209h1M24 215h1M29 227h1M46 231h1M49 231h1M28 239h1M31 239h1M40 239h1M42 239h1M44 239h1M52 239h1M56 239h2M60 239h1M64 239h1M67 239h1M13 241h1M17 245h1M13 247h2M22 247h1M25 247h2M12 249h1M19 253h1M30 253h1M12 255h1M15 255h1M18 255h1M21 255h3M28 255h1M12 257h1M15 257h1M21 257h1M30 257h1M12 259h1M15 259h1M21 259h1M28 259h1M33 259h1M13 263h1M18 263h2M41 263h1M43 263h1M21 273h1M27 273h1M8 277h1M25 279h1M35 279h2M8 285h1M12 285h1" stroke="#e06c75" stroke-opacity="0.68"/><path d="M36 245h1M41 245h1" stroke="#e5c07b" stroke-opacity="0.14"/><path d="M26 229h1M30 229h1M34 229h1M39 229h1M21 239h1M30 245h1M37 245h1M43 245h1M45 245h2" stroke="#e5c07b" stroke-opacity="0.28"/><path d="M31 229h1M33 229h1M36 229h3M22 239h1M29 245h1M33 245h1M35 245h1M38 245h2M42 245h1M47 245h2" stroke="#e5c07b" stroke-opacity="0.45"/><path d="M27 229h3M32 229h1M35 229h1M19 239h2M34 245h1M40 245h1M44 245h1" stroke="#e5c07b" stroke-opacity="0.68"/></svg></div>
    <div class="vline"></div>
    <div class="vslider"></div>
    <div class="ovr"></div>
    <div class="topshadow"></div>
  </div>

  <div class="status">
    <svg class="abs" style="left:14px;top:4px" width="11" height="14" viewBox="0 0 11 14" fill="none" stroke="#9da5b4" stroke-width="1.100">
      <circle cx="2.600" cy="2.600" r="1.500"/><circle cx="2.600" cy="11.400" r="1.500"/><circle cx="8.200" cy="4.600" r="1.500"/>
      <path d="M2.600 4.100v5.800M8.200 6.100c0 2.400-5.600 1.800-5.600 4"/>
    </svg>
    <span style="left:28px;letter-spacing:.2px">master</span>
    <svg class="abs" style="left:80px;top:4px" width="13" height="14" viewBox="0 0 13 14" fill="none" stroke="#9da5b4" stroke-width="1.500">
      <path d="M10.600 5.200A4.400 4.400 0 0 0 2.400 5M2.400 8.800a4.400 4.400 0 0 0 8.200.2"/>
      <path d="M11.600 2v3.600H8zM1.400 12V8.400H5z" fill="#9da5b4" stroke="none"/>
    </svg>
    <svg class="abs" style="left:104px;top:4.500px" width="13" height="13" viewBox="0 0 13 13"><circle cx="6.700" cy="6.500" r="5.400" fill="#9da5b4"/><path d="M4.600 4.400l4.200 4.200M8.800 4.400L4.600 8.600" stroke="#21252b" stroke-width="1.500"/></svg>
    <span style="left:120px">0</span>
    <svg class="abs" style="left:131px;top:4.500px" width="13" height="13" viewBox="0 0 13 13"><path d="M6.500.8l6 11.400H.5z" fill="#9da5b4"/><path d="M6.500 4.600v4M6.500 9.600v1.400" stroke="#21252b" stroke-width="1.400"/></svg>
    <span style="left:147.600px">0</span>
    <span style="left:844.500px">Ln 1, Col 1</span>
    <span style="left:917.500px;letter-spacing:.2px">Tab Size: 4</span>
    <span style="left:995.500px;letter-spacing:.3px">UTF-8</span>
    <span style="left:1047.500px">LF</span>
    <span style="left:1076.500px">HTML</span>
    <svg class="abs" style="left:1126px;top:4px" width="14" height="14" viewBox="0 0 14 14"><circle cx="7" cy="7" r="6.800" fill="#9da5b4"/><ellipse cx="4.700" cy="4.900" rx=".9" ry="1.250" fill="#21252b"/><ellipse cx="9.400" cy="4.900" rx=".9" ry="1.250" fill="#21252b"/><path d="M3.300 7.600a3.900 3.900 0 0 0 7.400 0" fill="none" stroke="#21252b" stroke-width="1.300" stroke-linecap="round"/></svg>
    <svg class="abs" style="left:1156px;top:4px" width="12" height="14" viewBox="0 0 12 14" fill="#9da5b4"><path d="M6 1.200c-2.600 0-3.800 2-3.800 4.200 0 2.600-.8 3.800-1.800 4.800v.8h11.200v-.8c-1-1-1.800-2.200-1.800-4.800 0-2.200-1.200-4.200-3.800-4.200z"/><circle cx="6" cy="12.200" r="1.300"/></svg>
  </div>
</div>
</body>
</html>
